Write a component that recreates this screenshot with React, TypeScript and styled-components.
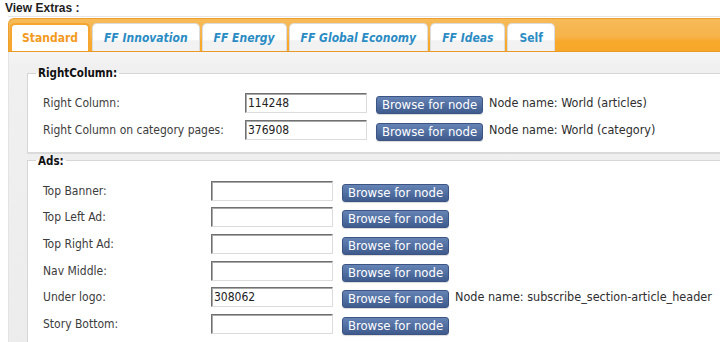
import styled, { createGlobalStyle } from 'styled-components'

const GlobalStyle = createGlobalStyle`
  body {
    margin: 0;
    background: #ffffff;
    font-family: "DejaVu Sans Condensed", "DejaVu Sans", sans-serif;
    font-size: 12px;
    color: #333333;
  }
`

interface TabItem {
  label: string
  italic?: boolean
  active?: boolean
}

interface FieldRow {
  label: string
  value?: string
  nodeName?: string
}

const tabs: TabItem[] = [
  { label: 'Standard', active: true },
  { label: 'FF Innovation', italic: true },
  { label: 'FF Energy', italic: true },
  { label: 'FF Global Economy', italic: true },
  { label: 'FF Ideas', italic: true },
  { label: 'Self' },
]

const rightColumnRows: FieldRow[] = [
  { label: 'Right Column:', value: '114248', nodeName: 'World (articles)' },
  { label: 'Right Column on category pages:', value: '376908', nodeName: 'World (category)' },
]

const adsRows: FieldRow[] = [
  { label: 'Top Banner:' },
  { label: 'Top Left Ad:' },
  { label: 'Top Right Ad:' },
  { label: 'Nav Middle:' },
  { label: 'Under logo:', value: '308062', nodeName: 'subscribe_section-article_header' },
  { label: 'Story Bottom:' },
]

function FieldGroup({ title, rows, labelWidth }: { title: string; rows: FieldRow[]; labelWidth: number }) {
  return (
    <Group>
      <Legend>{title}</Legend>
      <Rows>
        {rows.map((row) => (
          <Row key={row.label}>
            <Label $width={labelWidth}>{row.label}</Label>
            <Input type="text" defaultValue={row.value ?? ''} />
            <BrowseButton type="button">Browse for node</BrowseButton>
            {row.nodeName && <NodeName>Node name: {row.nodeName}</NodeName>}
          </Row>
        ))}
      </Rows>
    </Group>
  )
}

export default function App() {
  return (
    <Page>
      <GlobalStyle />
      <Title>View Extras :</Title>
      <Panel>
        <TabStrip>
          {tabs.map((tab) => (
            <Tab key={tab.label} $active={tab.active} $italic={tab.italic}>
              {tab.label}
            </Tab>
          ))}
        </TabStrip>
        <Body>
          <FieldGroup title="RightColumn:" rows={rightColumnRows} labelWidth={202} />
          <FieldGroup title="Ads:" rows={adsRows} labelWidth={168} />
        </Body>
      </Panel>
    </Page>
  )
}

const Page = styled.div`
  width: 720px;
  height: 342px;
  overflow: hidden;
`

const Title = styled.div`
  font-family: "Liberation Sans", Arial, sans-serif;
  font-weight: bold;
  font-size: 12px;
  line-height: 15px;
  color: #1e1e1e;
  padding: 1px 0 0 5px;
  height: 16px;
  box-sizing: border-box;
`

const Panel = styled.div`
  margin-left: 8px;
  border-top: 1px solid #e6e6e6;
  padding-top: 1px;
`

const TabStrip = styled.div`
  display: flex;
  align-items: flex-end;
  gap: 2px;
  height: 34px;
  box-sizing: border-box;
  padding: 4px 0 0 1px;
  margin-right: -10px;
  border: 1px solid #eda030;
  border-bottom-color: #e99a26;
  border-radius: 6px 0 0 0;
  background: linear-gradient(#f6bb58 0%, #f6b34a 55%, #f7a92c 70%, #f7a82a 100%);
`

const Tab = styled.div<{ $active?: boolean; $italic?: boolean }>`
  height: 28px;
  box-sizing: border-box;
  display: flex;
  align-items: center;
  padding: 0 ${(p) => (p.$active ? 10 : 11)}px;
  font-weight: bold;
  font-style: ${(p) => (p.$italic ? 'italic' : 'normal')};
  font-size: 12px;
  color: ${(p) => (p.$active ? '#f39a1e' : '#2b8bc3')};
  border: ${(p) => (p.$active ? '2px solid #f5a631' : '1px solid #dcdcdc')};
  border-bottom: none;
  border-radius: 5px 5px 0 0;
  background: ${(p) =>
    p.$active ? '#ffffff' : 'linear-gradient(#ffffff 0%, #ffffff 58%, #f2f2f2 62%, #f2f2f2 100%)'};
`

const Body = styled.div`
  background: linear-gradient(#f5f5f5 0px, #f0f0f0 14px, #ececec 100%);
  border-left: 1px solid #e3e3e3;
  padding: 14px 0 20px 18px;
  display: flex;
  flex-direction: column;
`

const Group = styled.fieldset`
  margin: 0 -20px 0 0;
  padding: 13px 0 12px 6px;
  border: 1px solid #d6d6d6;
  border-bottom: 2px solid #dadada;
  background: #ffffff;
  min-width: 0;
`

const Legend = styled.legend`
  font-weight: bold;
  font-size: 11.5px;
  line-height: 14px;
  color: #111111;
  padding: 0 2px 0 2px;
  margin-left: 2px;
`

const Rows = styled.div`
  display: flex;
  flex-direction: column;
  gap: 6.7px;
  padding-left: 9px;
`

const Row = styled.div`
  display: flex;
  align-items: flex-start;
  height: 20px;
  white-space: nowrap;
`

const Label = styled.div<{ $width: number }>`
  width: ${(p) => p.$width}px;
  flex-shrink: 0;
  font-size: 12px;
  line-height: 20px;
  color: #3c3c3c;
`

const Input = styled.input`
  width: 122px;
  height: 20px;
  box-sizing: border-box;
  margin: 0;
  padding: 0 2px;
  font-family: "DejaVu Sans Condensed", "DejaVu Sans", sans-serif;
  font-size: 12px;
  color: #222222;
  border: 1px solid;
  border-color: #707070 #dcdcdc #dcdcdc #707070;
  box-shadow: inset 1px 1px 0 #a8a8a8;
  outline: none;
`

const BrowseButton = styled.button`
  margin: 3px 0 0 9px;
  width: 107px;
  height: 18px;
  padding: 0;
  flex-shrink: 0;
  font-family: "DejaVu Sans Condensed", "DejaVu Sans", sans-serif;
  font-size: 13px;
  line-height: 16px;
  color: #ffffff;
  background: linear-gradient(#6583b5, #3f5b8e);
  border: 1px solid #3b5483;
  border-radius: 3px;
  box-shadow: 0 1px 1px rgba(0, 0, 0, 0.15);
`

const NodeName = styled.span`
  margin-left: 6px;
  font-size: 12.5px;
  line-height: 20px;
  color: #2e2e2e;
`
